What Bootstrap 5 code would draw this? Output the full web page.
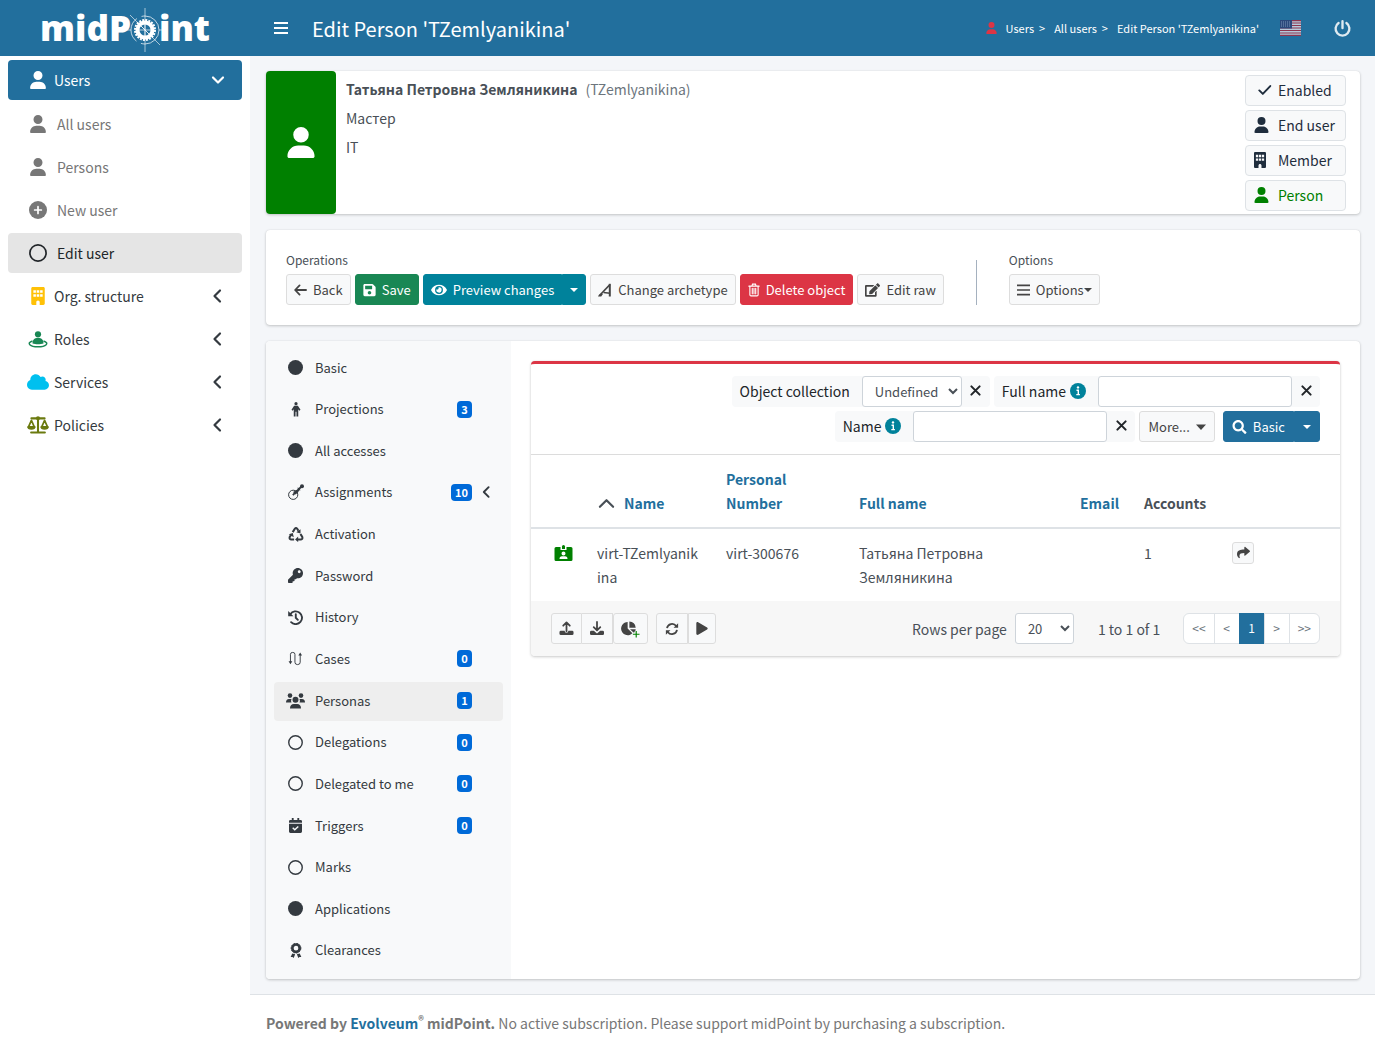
<!DOCTYPE html>
<html lang="en">
<head>
<meta charset="utf-8">
<meta name="viewport" content="width=device-width, initial-scale=1">
<title>Edit Person 'TZemlyanikina'</title>
<link href="https://cdn.jsdelivr.net/npm/bootstrap@5.3.0/dist/css/bootstrap.min.css" rel="stylesheet">
<style>
:root{--mp-blue:#226f9d;--mp-teal:#00829b;--mp-line:#dee2e6}
body{font-family:"Noto Sans CJK SC","Noto Sans",sans-serif;font-size:14px;line-height:24px;color:#495057;background:#f4f6f9}
a{text-decoration:none}
.ico{display:block;flex:none;fill:currentColor}
.fs-s{font-size:12px;line-height:20px}
.top-bar{height:56px;background:var(--mp-blue);color:#fff}
.brand{width:250px;font-family:"Open Sans",sans-serif;font-weight:800;font-size:35px;line-height:56px;color:#fff}
.brand svg{margin:4px -9px 0 -9px}
.burger{padding:0;border:0;background:none;color:#fff;margin-left:24px}
.page-title{font-size:20px;line-height:28px;font-weight:400;margin:2px 0 0 24px}
.crumbs{font-size:11px;gap:5px}
.crumbs a{color:#fff}
.crumbs .sep{margin-right:4px}
.lang{margin-left:21px}
.logout{margin:0 24px 0 33px;color:#dfeaf1}
.side{width:250px;background:#fff;padding:4px 8px}
.side .item{display:flex;align-items:center;height:40px;margin-bottom:3px;padding:0 16px 0 18px;border-radius:4px;color:#343a40}
.side .box{width:24px;margin-right:4px;display:flex;justify-content:center}
.side .item.open{background:var(--mp-blue);color:#fff}
.side .sub{padding-top:1px}
.side .sub .item{color:#777}
.side .sub .box{margin-right:7px}
.side .sub .item.current{background:#e5e5e5;color:#212529}
.main-col{padding:15px 15px 0 16px}
.pane{background:#fff;border-radius:4px;box-shadow:0 0 1px rgba(0,0,0,.125),0 1px 3px rgba(0,0,0,.2);margin-bottom:16px}
.pane.details{margin-bottom:15px}
.pane.ops{padding:20px}
.summary{padding:6px 0 0 10px;row-gap:5px}
.tags{padding:4px 14px 3px 0}
.portrait{width:70px;background:#008000;color:#fff;border-radius:4px}
.tag-btn{width:101px;height:31px;padding:0 8px 2px;border:1px solid var(--mp-line);border-radius:4px;background:#f8f9fa;color:#1f2d3d;display:flex;align-items:center}
.tag-btn .box{width:18px;margin-right:6px}
.bt{height:31px;padding:0 7px;border:1px solid #ddd;border-radius:3px;background:#f8f9fa;color:#444;font-size:13px;line-height:21px;display:inline-flex;align-items:center;justify-content:center;gap:6px}
.bt.ok{background:#198754;border-color:#198754;color:#fff}
.bt.info{background:var(--mp-teal);border-color:var(--mp-teal);color:#fff}
.bt.del{background:#dc3545;border-color:#dc3545;color:#fff}
.bt.prim{background:var(--mp-blue);border-color:var(--mp-blue);color:#fff;padding:0 8px}
.bt.first{border-radius:3px 0 0 3px}
.bt.last{border-radius:0 3px 3px 0}
.bt.more{padding:0 8px}
.bt.open-row{width:22px;height:22px;padding:0}
.caret{width:0;height:0;border:4px solid transparent;border-top-color:currentColor;border-bottom:0}
.divider{width:1px;background:#a5b1bf;align-self:stretch;margin:10px 32px 0 32px}
.detail-nav{width:245px;background:#f8f9fa;padding:8px;border-radius:4px 0 0 4px}
.detail-nav .item{display:flex;align-items:center;height:39px;padding:0 12px 2px;border-radius:4px;color:#343a40;font-size:13px}
.detail-nav .box{width:19px;display:flex;justify-content:center;margin-right:10px}
.detail-nav .item.current{background:#eee}
.count{margin-left:auto;margin-right:19px;min-width:15px;padding:0 4px;background:#006ad8;color:#fff;font-size:11px;font-weight:700;line-height:17px;border-radius:4px;text-align:center}
.count.tight{margin-right:9px}
.grid-card{border-top:3px solid #dc3545;margin:20px;align-self:flex-start;overflow:hidden}
.search{padding:12px 20px;border-bottom:1px solid #dcdcdc}
.crit{background:#f8f9fa;border-radius:4px;display:flex;align-items:center;height:31px;color:#212529}
.crit label{padding:0 12px 2px 8px}
.crit input,.crit select,.rows{height:31px;border:1px solid #ced4da;border-radius:3px;background:#fff;color:#495057;font-size:13px}
.crit input{width:194px}
.crit select{width:100px;padding:0 0 0 8px}
.rows{width:59px;padding:0 0 0 8px}
.x{border:0;background:none;padding:0 0 2px;width:28px;display:flex;justify-content:center;color:#212529}
.persons{table-layout:fixed;width:100%}
.persons th{padding:12px;vertical-align:bottom;border-bottom:2px solid var(--mp-line)}
.persons td{padding:12px;vertical-align:top}
.persons th a,.foot a{color:var(--mp-blue)}
.persons td.wrap{word-break:break-all;padding-right:16px}
.full-name{max-width:150px}
.grid-foot{background:#f7f7f7;padding:12px 20px}
.pager a,.pager span{display:block;min-width:26px;height:31px;border:1px solid var(--mp-line);margin-left:-1px;background:#fff;color:#6c757d;font-size:12px;line-height:27px;padding:0 8px;text-align:center}
.pager .active{background:var(--mp-blue);border-color:var(--mp-blue);color:#fff}
.foot{background:#fff;border-top:1px solid var(--mp-line);padding:16px;color:#777}
.foot sup{font-size:11px;top:-4px;line-height:0}
</style>
<script src="https://cdn.jsdelivr.net/npm/bootstrap@5.3.0/dist/js/bootstrap.bundle.min.js"></script>
</head>
<body>
<svg width="0" height="0" class="position-absolute" aria-hidden="true">
<symbol id="user" viewBox="0 0 448 512"><path d="M224 256A128 128 0 1 0 224 0a128 128 0 1 0 0 256zm-45.700 48C79.800 304 0 383.800 0 482.300C0 498.700 13.300 512 29.700 512l388.600 0c16.400 0 29.700-13.300 29.700-29.700C448 383.800 368.200 304 269.700 304l-91.400 0z"/></symbol>
<symbol id="ring" viewBox="0 0 16 16"><circle cx="8" cy="8" r="7.200" fill="none" stroke="currentColor" stroke-width="1.500"/></symbol>
<symbol id="disc" viewBox="0 0 16 16"><circle cx="8" cy="8" r="8"/></symbol>
<symbol id="plus" viewBox="0 0 16 16"><circle cx="8" cy="8" r="8"/><path d="M8 5v6M5 8h6" stroke="#fff" stroke-width="1.500" stroke-linecap="round"/></symbol>
<symbol id="building" viewBox="0 0 384 512"><path fill-rule="evenodd" d="M40 0C18 0 0 18 0 40V472c0 22 18 40 40 40H144V430c0-26.500 21.500-48 48-48s48 21.500 48 48v82h104c22 0 40-18 40-40V40c0-22-18-40-40-40H40zM60 90h72v76H60zM156 90h72v76h-72zM252 90h72v76h-72zM60 204h72v76H60zM156 204h72v76h-72zM252 204h72v76h-72z"/></symbol>
<symbol id="role" viewBox="0 0 20 17"><circle cx="10" cy="3.300" r="3.100"/><path d="M4.500 12.500c0-3.500 1.500-5.500 5.500-5.500s5.500 2 5.500 5.500c-3 1-8 1-11 0z"/><path d="M4.500 10C-2 12 2 15.800 10 15.800s12-3.800 5.500-5.800" fill="none" stroke="currentColor" stroke-width="1.400"/></symbol>
<symbol id="cloud" viewBox="0 0 640 512"><path d="M537.600 226.600c4.100-10.700 6.400-22.400 6.400-34.600 0-53-43-96-96-96-19.700 0-38.100 6-53.300 16.200C367 64.200 315.300 32 256 32c-88.400 0-160 71.600-160 160 0 2.700.1 5.400.2 8.100C40.200 219.800 0 273.200 0 336c0 79.500 64.500 144 144 144h368c70.700 0 128-57.300 128-128 0-61.900-44-113.600-102.400-125.400z"/></symbol>
<symbol id="scale" viewBox="0 0 640 512"><path d="M128 64h384M320 50v410M120 476h400" fill="none" stroke="currentColor" stroke-width="60" stroke-linecap="round"/><circle cx="320" cy="60" r="60"/><path d="M128 124L44 310h168zM512 124L428 310h168z" fill="none" stroke="currentColor" stroke-width="50" stroke-linejoin="round"/><path d="M0 300h256c0 60-55 94-128 94S0 360 0 300zM384 300h256c0 60-55 94-128 94s-128-34-128-94z"/></symbol>
<symbol id="left" viewBox="0 0 10 16"><path d="M8 2.500L2.500 8 8 13.500" fill="none" stroke="currentColor" stroke-width="2.200" stroke-linecap="round" stroke-linejoin="round"/></symbol>
<symbol id="down" viewBox="0 0 16 10"><path d="M3 2.500L8 7.500 13 2.500" fill="none" stroke="currentColor" stroke-width="2.200" stroke-linecap="round" stroke-linejoin="round"/></symbol>
<symbol id="up" viewBox="0 0 16 10"><path d="M2 8L8 2 14 8" fill="none" stroke="currentColor" stroke-width="2" stroke-linecap="round" stroke-linejoin="round"/></symbol>
<symbol id="bars" viewBox="0 0 14 14"><path d="M0 2h14M0 7h14M0 12h14" stroke="currentColor" stroke-width="1.800"/></symbol>
<symbol id="power" viewBox="0 0 16 16"><path d="M4.300 2.800a6.500 6.500 0 1 0 7.400 0M8 1.200v6.300" fill="none" stroke="currentColor" stroke-width="2.200" stroke-linecap="round"/></symbol>
<symbol id="check" viewBox="0 0 16 12"><path d="M1.500 6.500L5.500 10.500 14 1.500" fill="none" stroke="currentColor" stroke-width="2.200" stroke-linecap="round" stroke-linejoin="round"/></symbol>
<symbol id="back" viewBox="0 0 14 14"><path d="M13 7H1.500M6 2L1.200 7 6 12" fill="none" stroke="currentColor" stroke-width="1.900" stroke-linecap="round" stroke-linejoin="round"/></symbol>
<symbol id="save" viewBox="0 0 448 512"><path d="M433.941 129.941l-83.882-83.882A48 48 0 0 0 316.118 32H48C21.490 32 0 53.490 0 80v352c0 26.510 21.490 48 48 48h352c26.510 0 48-21.490 48-48V163.882a48 48 0 0 0-14.059-33.941zM224 416c-35.346 0-64-28.654-64-64 0-35.346 28.654-64 64-64s64 28.654 64 64c0 35.346-28.654 64-64 64zm96-304.520V212c0 6.627-5.373 12-12 12H76c-6.627 0-12-5.373-12-12V108c0-6.627 5.373-12 12-12h228.520c3.183 0 6.235 1.264 8.485 3.515l3.480 3.480A11.996 11.996 0 0 1 320 111.480z"/></symbol>
<symbol id="eye" viewBox="0 0 576 512"><path d="M572.520 241.400C518.290 135.590 410.930 64 288 64S57.680 135.640 3.480 241.410a32.350 32.350 0 0 0 0 29.190C57.710 376.410 165.070 448 288 448s230.320-71.640 284.520-177.410a32.350 32.350 0 0 0 0-29.190zM288 400a144 144 0 1 1 144-144 143.930 143.930 0 0 1-144 144zm0-240a95.310 95.310 0 0 0-25.310 3.790 47.850 47.850 0 0 1-66.900 66.900A95.780 95.780 0 1 0 288 160z"/></symbol>
<symbol id="arche" viewBox="0 0 14 14"><path d="M2 12L12 1.500" stroke="currentColor" stroke-width="1.800"/><path d="M11.800 .8V13.500" stroke="currentColor" stroke-width="2"/><path d="M5.500 9.500L12 10.300" stroke="currentColor" stroke-width="1.400"/><path d="M0 13.500c1-2.500 2.500-3 5-2.500l-1.800 2.500z"/></symbol>
<symbol id="trash" viewBox="0 0 14 16"><path d="M1 3.500h12M4.500 3.500L5.300 1.200h3.400l.8 2.300M2.200 4v9.500q0 1.300 1.300 1.300h7q1.300 0 1.300-1.300V4M5 6v6.500M7 6v6.500M9 6v6.500" fill="none" stroke="currentColor" stroke-width="1.300" stroke-linecap="round"/></symbol>
<symbol id="edit" viewBox="0 0 576 512"><path d="M402.600 83.200l90.200 90.200c3.800 3.800 3.800 10 0 13.800L274.400 405.600l-92.800 10.300c-12.400 1.400-22.900-9.100-21.500-21.500l10.300-92.800L388.800 83.200c3.800-3.800 10-3.800 13.800 0zm162-22.900l-48.800-48.800c-15.200-15.200-39.900-15.200-55.200 0l-35.400 35.400c-3.800 3.800-3.800 10 0 13.800l90.200 90.200c3.800 3.800 10 3.800 13.800 0l35.400-35.400c15.200-15.300 15.200-40 0-55.200zM384 346.200V448H64V128h229.800c3.200 0 6.200-1.300 8.500-3.500l40-40c7.600-7.600 2.200-20.500-8.500-20.500H48C21.500 64 0 85.500 0 112v352c0 26.500 21.500 48 48 48h352c26.500 0 48-21.500 48-48V306.200c0-10.700-12.900-16-20.500-8.500l-40 40c-2.200 2.300-3.500 5.300-3.500 8.500z"/></symbol>
<symbol id="male" viewBox="0 0 10 16"><circle cx="5" cy="1.800" r="1.700"/><path d="M3 4h4l2.800 4.300-1.300.9L7.400 7.600V15.500H5.500V10.500h-1v5H2.600V7.600L1.500 9.200.2 8.300z"/></symbol>
<symbol id="assign" viewBox="0 0 16 16"><circle cx="5.200" cy="10.800" r="4.600" fill="none" stroke="currentColor" stroke-width="1"/><path d="M4.800 11.200L14 2" stroke="currentColor" stroke-width="1.800"/><circle cx="14" cy="2.200" r="2"/><path d="M5 8l2.500 2.500L10 8.500l1.500-3-3 .5zM9 3.800l3.200 3.200-.2-3z"/></symbol>
<symbol id="recycle" viewBox="0 0 16 16"><path d="M4.500 5.500L6.700 1.900q1.300-1.600 2.600 0l1.300 2.200M12.800 7.500l1.900 3.200q.7 2.200-1.500 2.600H9.500M6 13.300H2.800q-2.200-.4-1.500-2.600L3 8" fill="none" stroke="currentColor" stroke-width="2.200"/><path d="M12.800 2.300v4.700L8.300 5.700zM10.300 10.100v6L7 13.300zM.3 7.800l4.300-1.400 1 4.400z"/></symbol>
<symbol id="key" viewBox="0 0 512 512"><path d="M512 176.001C512 273.203 433.202 352 336 352c-11.220 0-22.190-1.062-32.827-3.069l-24.012 27.014A23.999 23.999 0 0 1 261.223 384H224v40c0 13.255-10.745 24-24 24h-40v40c0 13.255-10.745 24-24 24H24c-13.255 0-24-10.745-24-24v-78.059c0-6.365 2.529-12.470 7.029-16.971l161.802-161.802C163.108 213.814 160 195.271 160 176 160 78.798 238.797.001 335.999 0 433.488-.001 512 78.511 512 176.001zM336 128c0 26.510 21.490 48 48 48s48-21.490 48-48-21.490-48-48-48-48 21.490-48 48z"/></symbol>
<symbol id="history" viewBox="0 0 16 16"><path d="M2.500 4.500A6.800 6.800 0 1 1 3.300 13M8.300 4.500V8.300L10.500 10.500" fill="none" stroke="currentColor" stroke-width="2" stroke-linecap="round"/><path d="M.2 1v5.600h5.600z"/></symbol>
<symbol id="cases" viewBox="0 0 16 16"><path d="M2.600 12V3.500q0-2 2.400-2t2.400 2V12q0 2.500 2.800 2.500T13 12V4" fill="none" stroke="currentColor" stroke-width="1"/><path d="M.6 10.800h4L2.600 14zM11 4.800h4L13 1.600z"/></symbol>
<symbol id="group" viewBox="0 0 19 16"><circle cx="4" cy="2.600" r="2.300"/><circle cx="15" cy="2.600" r="2.300"/><path d="M0 9.500Q0 6 3 6h2.500Q4.500 8 5.500 9.500zM19 9.500Q19 6 16 6h-2.500q1 2 0 3.500z"/><circle cx="9.500" cy="6.700" r="3"/><path d="M4 15.500q0-4.500 4-4.500h3q4 0 4 4.500z"/></symbol>
<symbol id="cal" viewBox="0 0 14 16"><path fill-rule="evenodd" d="M3 0h2v2h4V0h2v2h1.500Q14 2 14 3.500V5H0V3.500Q0 2 1.500 2H3zM0 6h14v8.500q0 1.500-1.500 1.500h-11Q0 16 0 14.500z"/><path d="M4 10.500l2.200 2.200L10 9" fill="none" stroke="#f8f9fa" stroke-width="1.500"/></symbol>
<symbol id="award" viewBox="0 0 12 16"><circle cx="6" cy="5.500" r="3.900" fill="none" stroke="currentColor" stroke-width="2.800"/><circle cx="6" cy="5.500" r="5.200" fill="none" stroke="currentColor" stroke-width="1" stroke-dasharray="2 1"/><path d="M2 11.300L.3 15l2-.2L3.500 16l1.600-4zM10 11.300l1.700 3.700-2-.2L8.500 16l-1.600-4z"/></symbol>
<symbol id="info" viewBox="0 0 16 16"><circle cx="8" cy="8" r="8" fill="#00829b"/><circle cx="8" cy="4.400" r="1.200" fill="#fff"/><path d="M6.500 7.200h1.800v4M6.300 11.600h3.600" fill="none" stroke="#fff" stroke-width="1.400"/></symbol>
<symbol id="cross" viewBox="0 0 12 12"><path d="M2.200 2.200l7.600 7.600M9.800 2.200L2.200 9.800" stroke="currentColor" stroke-width="1.900" stroke-linecap="round"/></symbol>
<symbol id="search" viewBox="0 0 512 512"><path d="M505 442.700L405.300 343c-4.500-4.500-10.600-7-17-7H372c27.600-35.300 44-79.700 44-128C416 93.100 322.900 0 208 0S0 93.100 0 208s93.100 208 208 208c48.300 0 92.700-16.400 128-44v16.300c0 6.400 2.500 12.500 7 17l99.700 99.700c9.400 9.400 24.600 9.400 33.900 0l28.300-28.300c9.400-9.400 9.400-24.600.1-34zM208 336c-70.700 0-128-57.200-128-128 0-70.700 57.200-128 128-128 70.700 0 128 57.200 128 128 0 70.700-57.200 128-128 128z"/></symbol>
<symbol id="badge-id" viewBox="0 0 18 16"><path fill-rule="evenodd" d="M1.500 2H6v3h6V2h4.500Q18 2 18 3.500v11q0 1.500-1.500 1.500h-15Q0 16 0 14.500v-11Q0 2 1.500 2zM9 6.500a2 2 0 1 0 0 4 2 2 0 0 0 0-4zM5 14h8q0-2.700-2.500-2.700h-3Q5 11.300 5 14z"/><path d="M7.500 4V1.500Q7.500 0 9 0t1.500 1.500V4z"/></symbol>
<symbol id="share" viewBox="0 0 512 512"><path d="M503.691 189.836L327.687 37.851C312.281 24.546 288 35.347 288 56.015v80.053C127.371 137.907 0 170.100 0 322.326c0 61.441 39.581 122.309 83.333 154.132 13.653 9.931 33.111-2.533 28.077-18.631C66.066 312.814 132.917 274.316 288 272.085V360c0 20.700 24.300 31.453 39.687 18.164l176.004-152c11.071-9.562 11.086-26.753 0-36.328z"/></symbol>
<symbol id="upload" viewBox="0 0 16 16"><path d="M8 11V2M4.500 5L8 1.500 11.500 5" fill="none" stroke="currentColor" stroke-width="1.900" stroke-linecap="round" stroke-linejoin="round"/><path d="M2 10.500h4q0 2 2 2t2-2h4q1.500 0 1.500 1.500v1.500Q15.500 15 14 15H2Q.5 15 .5 13.500V12Q.5 10.500 2 10.500z"/></symbol>
<symbol id="download" viewBox="0 0 16 16"><path d="M8 1v8.500M4.500 6.500L8 10l3.500-3.500" fill="none" stroke="currentColor" stroke-width="1.900" stroke-linecap="round" stroke-linejoin="round"/><path d="M2 10.500h2.600L8 13.200l3.400-2.700H14q1.500 0 1.500 1.500v1.500Q15.500 15 14 15H2Q.5 15 .5 13.500V12Q.5 10.500 2 10.500z"/></symbol>
<symbol id="pie" viewBox="0 0 20 18"><path d="M7 1.500V8.500l5 5A7 7 0 1 1 7 1.500zM8.800 1a6.800 6.800 0 0 1 6.700 6.700H8.800zM9.500 9.200h6q-.2 2.500-1.800 4.100z"/><path d="M16 11v7M12.500 14.500h7" stroke="#f8f9fa" stroke-width="3"/><path d="M16 11v7M12.500 14.500h7" stroke="#008000" stroke-width="1.200"/></symbol>
<symbol id="sync" viewBox="0 0 16 16"><path d="M2.300 7A5.800 5.800 0 0 1 12.800 4.700M13.700 9A5.800 5.800 0 0 1 3.200 11.300" fill="none" stroke="currentColor" stroke-width="2"/><path d="M15 1.500v5.200H9.800zM1 14.500V9.300h5.200z"/></symbol>
<symbol id="play" viewBox="0 0 448 512"><path d="M424.400 214.700L72.400 6.600C43.800-10.300 0 6.100 0 47.900V464c0 37.500 40.700 60.100 72.400 41.300l352-208c31.400-18.500 31.500-64.100 0-82.600z"/></symbol>
</svg>

<div class="d-flex flex-column min-vh-100">
<header class="top-bar d-flex align-items-center">
  <a class="brand d-flex align-items-center justify-content-center" href="#" aria-label="midPoint"><span>midP</span><svg class="ico" width="46" height="46" viewBox="0 0 46 46"><g fill="none" stroke="#fff"><path d="M23 1v44M1 23h8M37 23h8M8 8l30 30" stroke-width="1" opacity=".6"/><circle cx="23" cy="23" r="14" stroke-width="1" opacity=".7" stroke-dasharray="26 5"/><circle cx="23" cy="23" r="7.500" stroke-width="4"/><circle cx="23" cy="23" r="10" stroke-width="2" stroke-dasharray="2 1.140"/><path d="M17 23h12M23 17v12M19 19l8 8" stroke-width="1" opacity=".7"/></g></svg><span>int</span></a>
  <button class="burger" type="button" aria-label="Toggle menu"><svg class="ico" width="14" height="14"><use href="#bars"/></svg></button>
  <h1 class="page-title">Edit Person 'TZemlyanikina'</h1>
  <nav class="crumbs d-flex align-items-center ms-auto" aria-label="Breadcrumb">
    <svg class="ico me-1" width="11" height="12" style="color:#dc3545"><use href="#user"/></svg>
    <a href="#">Users</a><span class="sep">&gt;</span><a href="#">All users</a><span class="sep">&gt;</span><a href="#">Edit Person 'TZemlyanikina'</a>
  </nav>
  <a href="#" class="lang" aria-label="Language"><svg class="ico opacity-75" width="21" height="16" viewBox="0 0 21 16"><path fill="#e8e8ee" d="M0 0h21v16H0z"/><path stroke="#b22234" stroke-width="1.200" d="M0 .6h21M0 3h21M0 5.500h21M0 8h21M0 10.500h21M0 13h21M0 15.400h21"/><path fill="#2f3b70" d="M0 0h12v8.500H0z"/><path stroke="#9aa3c4" stroke-dasharray="1 1" d="M1 2h9M1 4h9M1 6h9"/></svg></a>
  <a href="#" class="logout" aria-label="Log out"><svg class="ico" width="17" height="17"><use href="#power"/></svg></a>
</header>

<div class="d-flex flex-grow-1">
<nav class="side flex-shrink-0" aria-label="Main">
  <a class="item open" href="#"><span class="box"><svg class="ico" width="16" height="18"><use href="#user"/></svg></span>Users<svg class="ico ms-auto" width="16" height="10"><use href="#down"/></svg></a>
  <div class="sub">
    <a class="item" href="#"><span class="box"><svg class="ico" width="16" height="18"><use href="#user"/></svg></span>All users</a>
    <a class="item" href="#"><span class="box"><svg class="ico" width="16" height="18"><use href="#user"/></svg></span>Persons</a>
    <a class="item" href="#"><span class="box"><svg class="ico" width="18" height="18"><use href="#plus"/></svg></span>New user</a>
    <a class="item current" href="#"><span class="box"><svg class="ico" width="18" height="18"><use href="#ring"/></svg></span>Edit user</a>
  </div>
  <a class="item" href="#"><span class="box" style="color:#ffc107"><svg class="ico" width="14" height="18"><use href="#building"/></svg></span>Org. structure<svg class="ico ms-auto me-1" width="10" height="16"><use href="#left"/></svg></a>
  <a class="item" href="#"><span class="box" style="color:#198754"><svg class="ico" width="20" height="17"><use href="#role"/></svg></span>Roles<svg class="ico ms-auto me-1" width="10" height="16"><use href="#left"/></svg></a>
  <a class="item" href="#"><span class="box" style="color:#00c0ef"><svg class="ico" width="22" height="18"><use href="#cloud"/></svg></span>Services<svg class="ico ms-auto me-1" width="10" height="16"><use href="#left"/></svg></a>
  <a class="item" href="#"><span class="box" style="color:#6b7a0f"><svg class="ico" width="22" height="18"><use href="#scale"/></svg></span>Policies<svg class="ico ms-auto me-1" width="10" height="16"><use href="#left"/></svg></a>
</nav>

<div class="d-flex flex-column flex-grow-1">
<main class="main-col d-flex flex-column flex-grow-1">
  <section class="pane d-flex">
    <div class="portrait d-flex align-items-center justify-content-center"><svg class="ico" width="28" height="31"><use href="#user"/></svg></div>
    <div class="summary d-flex flex-column">
      <div><strong>Татьяна Петровна Земляникина</strong><span class="ms-2 text-secondary">(TZemlyanikina)</span></div>
      <div>Мастер</div>
      <div>IT</div>
    </div>
    <div class="tags d-flex flex-column gap-1 ms-auto">
      <button class="tag-btn" type="button"><span class="box"><svg class="ico ms-1" width="14" height="12"><use href="#check"/></svg></span>Enabled</button>
      <button class="tag-btn" type="button"><span class="box"><svg class="ico" width="15" height="16"><use href="#user"/></svg></span>End user</button>
      <button class="tag-btn" type="button"><span class="box"><svg class="ico" width="12" height="16"><use href="#building"/></svg></span>Member</button>
      <button class="tag-btn" type="button" style="color:#008000"><span class="box"><svg class="ico" width="15" height="16"><use href="#user"/></svg></span>Person</button>
    </div>
  </section>

  <section class="pane ops d-flex">
    <div>
      <div class="fs-s mb-1">Operations</div>
      <div class="d-flex gap-1">
        <button class="bt" type="button"><svg class="ico" width="13" height="14"><use href="#back"/></svg>Back</button>
        <button class="bt ok" type="button"><svg class="ico" width="13" height="14"><use href="#save"/></svg>Save</button>
        <div class="d-flex">
          <button class="bt info first" type="button"><svg class="ico" width="16" height="14"><use href="#eye"/></svg>Preview changes</button>
          <button class="bt info last" type="button" aria-label="More preview actions"><span class="caret"></span></button>
        </div>
        <button class="bt" type="button"><svg class="ico" width="14" height="14"><use href="#arche"/></svg>Change archetype</button>
        <button class="bt del" type="button"><svg class="ico" width="12" height="14"><use href="#trash"/></svg>Delete object</button>
        <button class="bt" type="button"><svg class="ico" width="15" height="14"><use href="#edit"/></svg>Edit raw</button>
      </div>
    </div>
    <div class="divider"></div>
    <div>
      <div class="fs-s mb-1">Options</div>
      <button class="bt" type="button"><svg class="ico" width="13" height="14"><use href="#bars"/></svg><span class="d-flex align-items-center">Options<span class="caret"></span></span></button>
    </div>
  </section>

  <section class="pane details d-flex flex-grow-1">
    <nav class="detail-nav d-flex flex-column justify-content-between flex-shrink-0" aria-label="Details">
      <a class="item" href="#"><span class="box"><svg class="ico" width="15" height="15"><use href="#disc"/></svg></span>Basic</a>
      <a class="item" href="#"><span class="box"><svg class="ico" width="10" height="15"><use href="#male"/></svg></span>Projections<span class="count">3</span></a>
      <a class="item" href="#"><span class="box"><svg class="ico" width="15" height="15"><use href="#disc"/></svg></span>All accesses</a>
      <a class="item" href="#"><span class="box"><svg class="ico" width="16" height="16"><use href="#assign"/></svg></span>Assignments<span class="count tight">10</span><svg class="ico" width="10" height="14"><use href="#left"/></svg></a>
      <a class="item" href="#"><span class="box"><svg class="ico" width="16" height="15"><use href="#recycle"/></svg></span>Activation</a>
      <a class="item" href="#"><span class="box"><svg class="ico" width="15" height="15"><use href="#key"/></svg></span>Password</a>
      <a class="item" href="#"><span class="box"><svg class="ico" width="15" height="15"><use href="#history"/></svg></span>History</a>
      <a class="item" href="#"><span class="box"><svg class="ico" width="15" height="15"><use href="#cases"/></svg></span>Cases<span class="count">0</span></a>
      <a class="item current" href="#"><span class="box"><svg class="ico" width="19" height="16"><use href="#group"/></svg></span>Personas<span class="count">1</span></a>
      <a class="item" href="#"><span class="box"><svg class="ico" width="15" height="15"><use href="#ring"/></svg></span>Delegations<span class="count">0</span></a>
      <a class="item" href="#"><span class="box"><svg class="ico" width="15" height="15"><use href="#ring"/></svg></span>Delegated to me<span class="count">0</span></a>
      <a class="item" href="#"><span class="box"><svg class="ico" width="13" height="15"><use href="#cal"/></svg></span>Triggers<span class="count">0</span></a>
      <a class="item" href="#"><span class="box"><svg class="ico" width="15" height="15"><use href="#ring"/></svg></span>Marks</a>
      <a class="item" href="#"><span class="box"><svg class="ico" width="15" height="15"><use href="#disc"/></svg></span>Applications</a>
      <a class="item" href="#"><span class="box"><svg class="ico" width="12" height="15"><use href="#award"/></svg></span>Clearances</a>
    </nav>
    <div class="pane grid-card flex-grow-1">
      <form class="search d-flex flex-wrap justify-content-end gap-1">
        <div class="crit"><label for="oc">Object collection</label><select id="oc"><option>Undefined</option></select><button class="x" type="button" aria-label="Remove"><svg class="ico" width="13" height="13"><use href="#cross"/></svg></button></div>
        <div class="crit"><label for="fn" class="d-flex align-items-center gap-1">Full name<svg class="ico" width="16" height="16"><use href="#info"/></svg></label><input id="fn" type="text"><button class="x" type="button" aria-label="Remove"><svg class="ico" width="13" height="13"><use href="#cross"/></svg></button></div>
        <div class="crit"><label for="nm" class="d-flex align-items-center gap-1">Name<svg class="ico" width="16" height="16"><use href="#info"/></svg></label><input id="nm" type="text"><button class="x" type="button" aria-label="Remove"><svg class="ico" width="13" height="13"><use href="#cross"/></svg></button></div>
        <button class="bt more" type="button">More...<svg class="ico" width="10" height="6" viewBox="0 0 10 6"><path d="M0 .5h10L5 6z"/></svg></button>
        <div class="d-flex ms-1"><button class="bt prim first" type="submit"><svg class="ico" width="15" height="14"><use href="#search"/></svg>Basic</button><button class="bt prim last" type="button" aria-label="Search mode"><span class="caret"></span></button></div>
      </form>
      <table class="persons">
        <colgroup><col style="width:54px"><col style="width:129px"><col style="width:133px"><col><col style="width:64px"><col style="width:88px"><col style="width:120px"></colgroup>
        <thead><tr><th></th><th><span class="d-flex align-items-center gap-2"><svg class="ico" width="19" height="11"><use href="#up"/></svg><a href="#">Name</a></span></th><th><a href="#">Personal Number</a></th><th><a href="#">Full name</a></th><th><a href="#">Email</a></th><th>Accounts</th><th></th></tr></thead>
        <tbody><tr><td><svg class="ico mt-1 ms-auto" width="19" height="16" style="color:#008000"><use href="#badge-id"/></svg></td><td class="wrap">virt-TZemlyanikina</td><td>virt-300676</td><td><div class="full-name">Татьяна Петровна Земляникина</div></td><td></td><td>1</td><td><button class="bt open-row" type="button" aria-label="Open"><svg class="ico" width="13" height="13"><use href="#share"/></svg></button></td></tr></tbody>
      </table>
      <div class="grid-foot d-flex align-items-center">
        <div class="d-flex">
          <button class="bt first" type="button" aria-label="Import"><svg class="ico" width="15" height="15"><use href="#upload"/></svg></button><button class="bt rounded-0 border-start-0" type="button" aria-label="Export"><svg class="ico" width="16" height="15"><use href="#download"/></svg></button><button class="bt" type="button" aria-label="Report"><svg class="ico" width="19" height="18"><use href="#pie"/></svg></button>
        </div>
        <div class="d-flex ms-2">
          <button class="bt first" type="button" aria-label="Refresh"><svg class="ico" width="16" height="14"><use href="#sync"/></svg></button><button class="bt last" type="button" aria-label="Start auto refresh"><svg class="ico" width="12" height="13"><use href="#play"/></svg></button>
        </div>
        <label for="rpp" class="ms-auto me-2">Rows per page</label><select id="rpp" class="rows"><option>20</option></select>
        <span class="mx-4">1 to 1 of 1</span>
        <nav class="pager d-flex" aria-label="Pages"><a class="rounded-start" href="#">&lt;&lt;</a><a href="#">&lt;</a><span class="active">1</span><a href="#">&gt;</a><a class="rounded-end" href="#">&gt;&gt;</a></nav>
      </div>
    </div>
  </section>
</main>
<footer class="foot"><strong>Powered by <a href="#">Evolveum</a><sup>®</sup> midPoint.</strong> No active subscription. Please support midPoint by purchasing a subscription.</footer>
</div>
</div>
</div>
</body>
</html>
